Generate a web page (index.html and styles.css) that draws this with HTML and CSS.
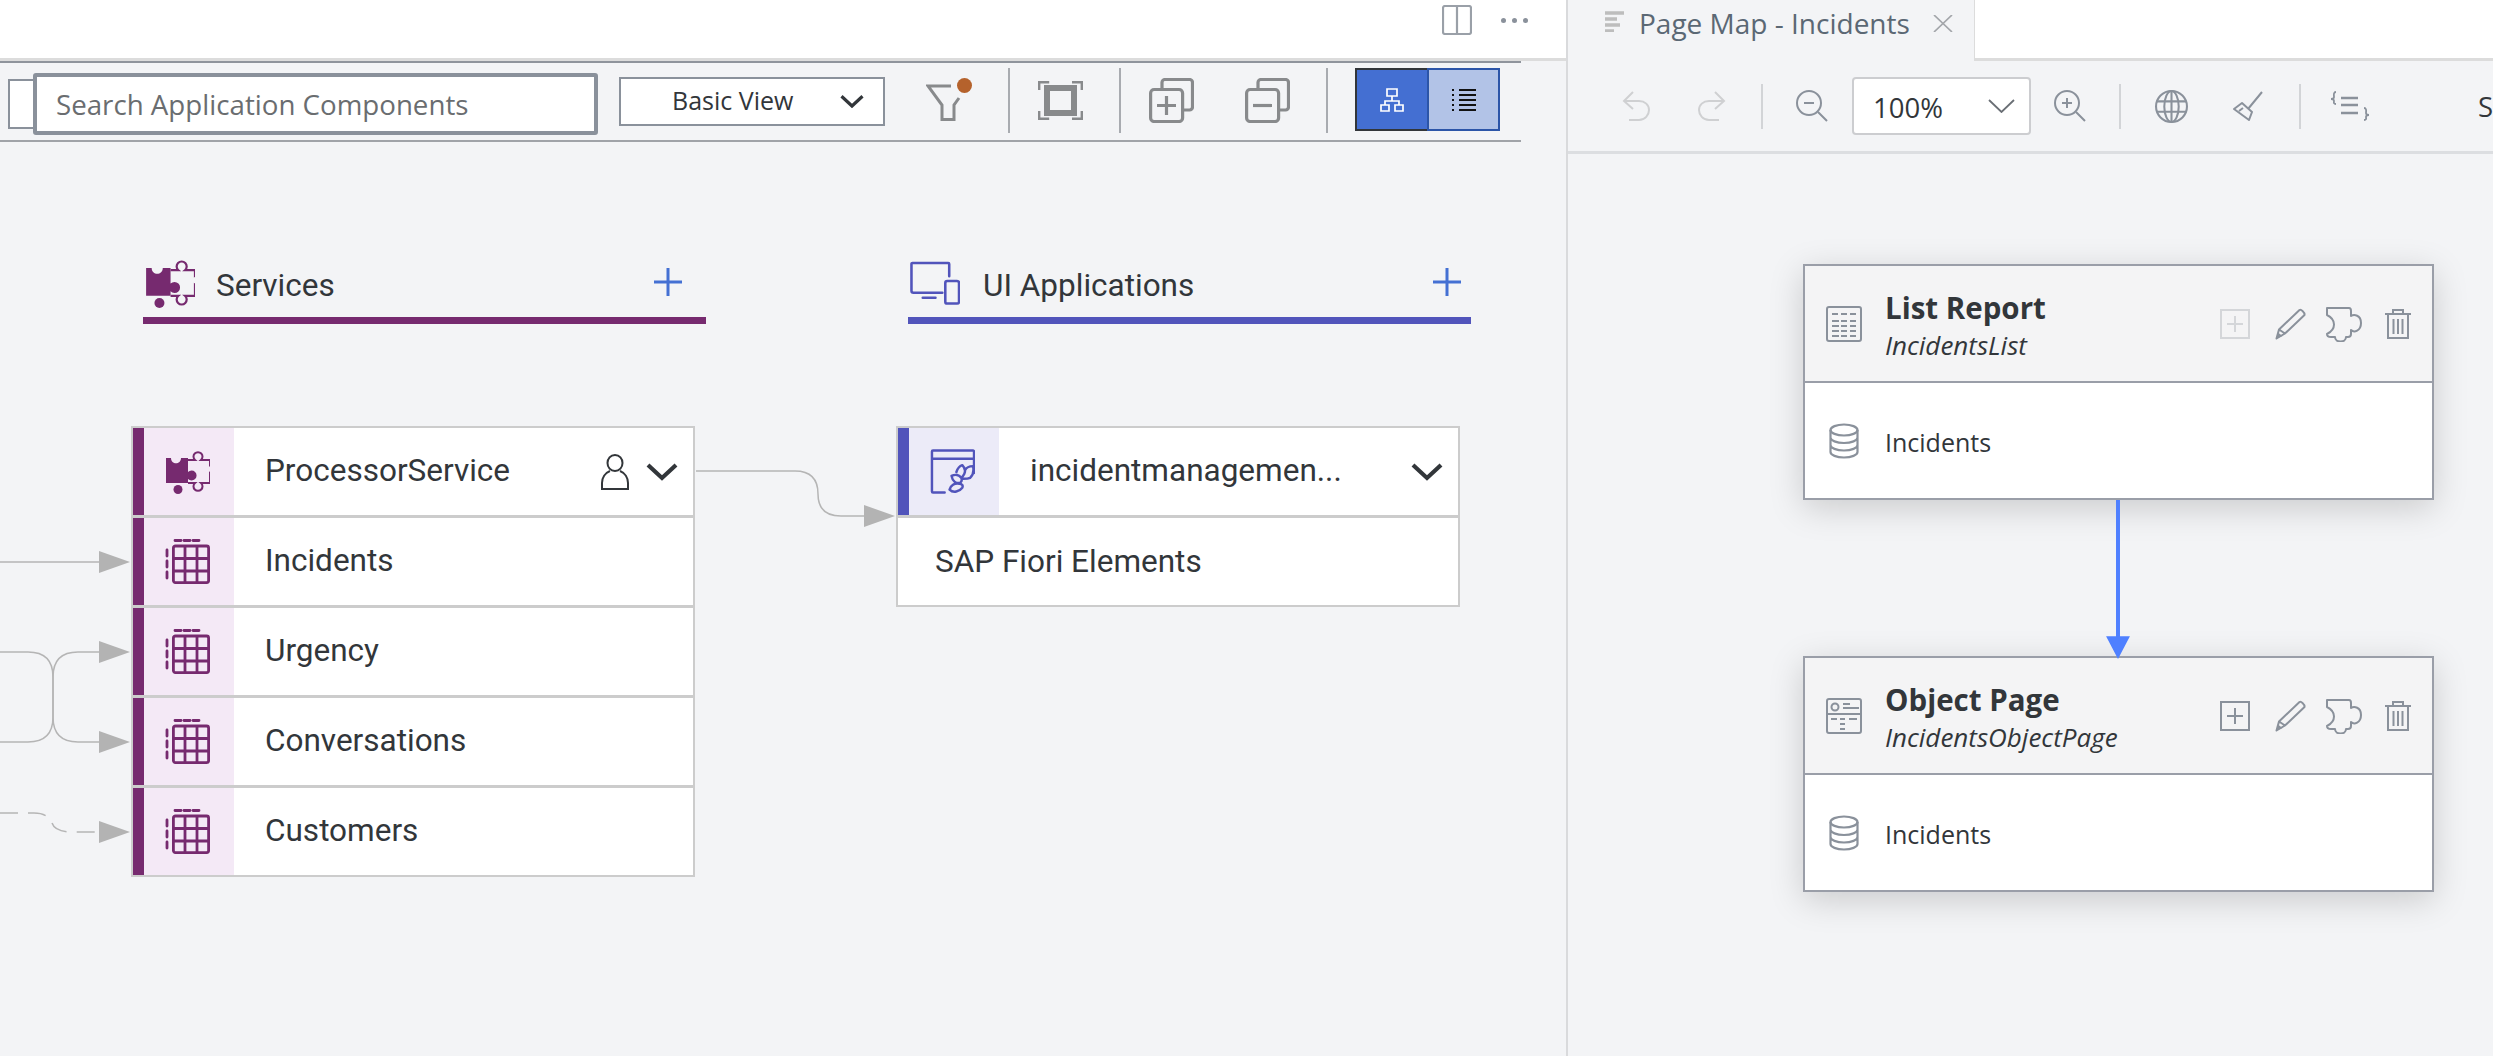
FILE: index.html
```html
<!DOCTYPE html>
<html lang="en">
<head>
  <meta charset="UTF-8" />
  <title>Application Modeler - Page Map</title>
  <link rel="stylesheet" href="styles.css">
</head>
<body>
  <svg class="icon-defs" width="0" height="0">
    <defs>
      <symbol id="i-puzzle" viewBox="0 0 45 45">
        <path fill="currentColor" d="M1 9h5c0 7 10 7 10 0h7v14a5 5 0 1 1 0 7v4H1z"/>
        <circle fill="currentColor" cx="13" cy="40.500" r="4.500"/>
        <path fill="none" stroke="currentColor" stroke-width="2" d="M23 11h7a4.500 4.500 0 1 1 6 0h9v5a4.500 4.500 0 1 1 0 8v10h-9a4.500 4.500 0 1 1-6 0h-7"/>
      </symbol>
      <symbol id="i-table" viewBox="0 0 45 45">
        <g fill="none" stroke="currentColor" stroke-width="2.800">
          <rect x="8.400" y="7" width="35.200" height="36.600" rx="2"/>
          <path d="M20 7v37M32 7v37M8 19.500h36M8 32h36"/>
          <path stroke-linecap="round" d="M10 1.500h6M19 1.500h6M28 1.500h6M2 11v6M2 22v6M2 33v6"/>
        </g>
      </symbol>
      <symbol id="i-chevron" viewBox="0 0 32 18">
        <path fill="none" stroke="currentColor" stroke-width="4.200" d="M2 2l14 13L30 2"/>
      </symbol>
      <symbol id="i-add" viewBox="0 0 30 30">
        <path fill="none" stroke="currentColor" stroke-width="2" d="M1 1h28v28H1zM15 7v16M7 15h16"/>
      </symbol>
      <symbol id="i-pencil" viewBox="0 0 32 32">
        <path fill="none" stroke="currentColor" stroke-width="2" stroke-linejoin="round" d="M1.500 30.500l2.500-9L24.500 2c1.500-1 5.500 2.500 5 5L10 25.500zM4 21.500l6 4"/>
        <path fill="currentColor" d="M1.500 30.500l1.500-6 4.500 3.500z"/>
      </symbol>
      <symbol id="i-ext" viewBox="0 0 36 36">
        <path fill="none" stroke="currentColor" stroke-width="2" stroke-linejoin="round" d="M1 2h22c1 0 2 1 2 3v5c3-2 10-1 10 7s-7 10-10 7v4c0 2-1 3-3 3h-2c0 6-11 6-11 0H5c-2 0-4-1-4-3 4-2 7-5 7-9.500S5 11 1 9z"/>
      </symbol>
      <symbol id="i-trash" viewBox="0 0 26 30">
        <path fill="none" stroke="currentColor" stroke-width="2" d="M0 5h26M8 5V1h10v4M3 5v24h20V5M8.500 10v15M13 10v15M17.500 10v15"/>
      </symbol>
      <symbol id="i-db" viewBox="0 0 30 36">
        <g fill="none" stroke="currentColor" stroke-width="2.200">
          <ellipse cx="15" cy="7" rx="13.500" ry="5.500"/>
          <path d="M1.500 7v22c0 3 6 5.500 13.500 5.500s13.500-2.500 13.500-5.500V7M1.500 14.500c0 3 6 5.500 13.500 5.500s13.500-2.500 13.500-5.500M1.500 22c0 3 6 5.500 13.500 5.500S28.500 25 28.500 22"/>
        </g>
      </symbol>
    </defs>
  </svg>

  <div class="workspace">
    <section class="modeler">
      <div class="title-bar">
        <svg class="split-icon" viewBox="0 0 30 30"><path fill="none" stroke="currentColor" stroke-width="2.200" d="M3 1h24a2 2 0 0 1 2 2v24a2 2 0 0 1-2 2H3a2 2 0 0 1-2-2V3a2 2 0 0 1 2-2zM15 1v28"/></svg>
        <div class="more-dots"><span></span><span></span><span></span></div>
      </div>

      <div class="modeler-toolbar">
        <div class="search-stub"></div>
        <div class="search-box">Search Application Components</div>
        <div class="view-select">
          <span>Basic View</span>
          <svg class="view-chevron" viewBox="0 0 32 18"><use href="#i-chevron"/></svg>
        </div>
        <div class="filter-btn">
          <svg class="filter-icon" viewBox="0 0 36 37"><path fill="none" stroke="#888a8c" stroke-width="3" d="M25 2H2l14 19v14.500h12V21l5-7"/></svg>
          <span class="filter-dot"></span>
        </div>
        <div class="tool-sep sep-fit"></div>
        <svg class="fit-icon" viewBox="0 0 45 39">
          <g fill="none" stroke="#888a8c">
            <path stroke-width="2.400" d="M1.200 9V1.200h10M34 1.200h9.800V9M1.200 30v7.800h10M34 37.800h9.800V30"/>
            <rect x="9" y="7" width="27" height="25" stroke-width="6"/>
          </g>
        </svg>
        <div class="tool-sep sep-copy"></div>
        <svg class="copy-icon" viewBox="0 0 45 45">
          <g fill="none" stroke="#888a8c" stroke-width="3.200">
            <path d="M13 11V4.500a3 3 0 0 1 3-3h24.500a3 3 0 0 1 3 3V29a3 3 0 0 1-3 3H34"/>
            <rect x="1.600" y="11.500" width="32" height="32" rx="3.500"/>
            <path d="M17.500 18v19M8 27.500h19"/>
          </g>
        </svg>
        <svg class="copy-icon copy-minus" viewBox="0 0 45 45">
          <g fill="none" stroke="#888a8c" stroke-width="3.200">
            <path d="M13 11V4.500a3 3 0 0 1 3-3h24.500a3 3 0 0 1 3 3V29a3 3 0 0 1-3 3H34"/>
            <rect x="1.600" y="11.500" width="32" height="32" rx="3.500"/>
            <path d="M8 27.500h19"/>
          </g>
        </svg>
        <div class="tool-sep sep-toggle"></div>
        <div class="view-toggle">
          <div class="toggle-part toggle-on">
            <svg class="toggle-icon" viewBox="0 0 24 24"><path fill="none" stroke="#fff" stroke-width="1.700" d="M7 1h10v7H7zM12 8v5M5 17v-4h14v4M1 17h8v6H1zM15 17h8v6h-8z"/></svg>
          </div>
          <div class="toggle-part toggle-off">
            <svg class="toggle-icon" viewBox="0 0 24 24"><path fill="none" stroke="#111" stroke-width="1.800" d="M7 2h17M7 7h17M7 12h17M7 17h17M7 22h17M0 2h2M0 7h2M0 12h2M0 17h2M0 22h2"/></svg>
          </div>
        </div>
      </div>

      <div class="diagram">
        <svg class="wires" viewBox="0 142 1566 914">
          <g fill="none" stroke="#b5b5b5" stroke-width="1.500">
            <path d="M0 562H100"/>
            <path d="M0 652H28Q53 652 53 677V717Q53 742 28 742H0"/>
            <path d="M100 652H78Q53 652 53 677V717Q53 742 78 742H100"/>
            <path stroke-dasharray="18 10" d="M0 813H34Q48 813 52 823Q55 832 72 832H100"/>
            <path d="M696 471H795Q818 471 818 494Q818 516 841 516H866"/>
          </g>
          <g fill="#b3b3b3">
            <path d="M99 551L130 562L99 573z"/>
            <path d="M99 641L130 652L99 663z"/>
            <path d="M99 731L130 742L99 753z"/>
            <path d="M99 821L130 832L99 843z"/>
            <path d="M864 505L895 516L864 527z"/>
          </g>
        </svg>

        <div class="lane lane-services">
          <svg class="lane-icon"><use href="#i-puzzle"/></svg>
          <span class="lane-name">Services</span>
          <svg class="lane-plus" viewBox="0 0 28 28"><path fill="none" stroke="#4470d3" stroke-width="3" d="M14 0v28M0 14h28"/></svg>
        </div>
        <div class="lane lane-apps">
          <svg class="lane-icon" viewBox="0 0 51 44">
            <g fill="none" stroke="currentColor" stroke-width="2.600" stroke-linecap="round" stroke-linejoin="round">
              <path d="M40 15V2.500a1 1 0 0 0-1-1H2.500a1 1 0 0 0-1 1V30a2 2 0 0 0 2 2H33M13 37h13"/>
              <rect x="36" y="20" width="14" height="23" rx="2"/>
            </g>
          </svg>
          <span class="lane-name">UI Applications</span>
          <svg class="lane-plus" viewBox="0 0 28 28"><path fill="none" stroke="#4470d3" stroke-width="3" d="M14 0v28M0 14h28"/></svg>
        </div>

        <div class="node node-services">
          <div class="node-row">
            <div class="node-tag"><svg class="tag-icon"><use href="#i-puzzle"/></svg></div>
            <span class="node-label">ProcessorService</span>
            <svg class="person-icon" viewBox="0 0 28 36"><path fill="none" stroke="#32363a" stroke-width="2" d="M14 1c4.500 0 7.500 3.500 7.500 8s-3 8-7.500 8-7.500-3.500-7.500-8 3-8 7.500-8zM9 17C4 19 1 24 1 29v6h26v-6c0-5-3-10-8-12"/></svg>
            <svg class="node-chevron"><use href="#i-chevron"/></svg>
          </div>
          <div class="node-row">
            <div class="node-tag"><svg class="tag-icon"><use href="#i-table"/></svg></div>
            <span class="node-label">Incidents</span>
          </div>
          <div class="node-row">
            <div class="node-tag"><svg class="tag-icon"><use href="#i-table"/></svg></div>
            <span class="node-label">Urgency</span>
          </div>
          <div class="node-row">
            <div class="node-tag"><svg class="tag-icon"><use href="#i-table"/></svg></div>
            <span class="node-label">Conversations</span>
          </div>
          <div class="node-row">
            <div class="node-tag"><svg class="tag-icon"><use href="#i-table"/></svg></div>
            <span class="node-label">Customers</span>
          </div>
        </div>

        <div class="node node-apps">
          <div class="node-row">
            <div class="node-tag">
              <svg class="tag-icon" viewBox="0 0 46 45">
                <g fill="none" stroke="currentColor" stroke-width="2.500" stroke-linejoin="round" stroke-linecap="round">
                  <path d="M45 24V2a1 1 0 0 0-1-1H3a1 1 0 0 0-1 1v41a1 1 0 0 0 1 1h12M2 9.500h43"/>
                  <path d="M22 27c4-2 8-1 10 2 1 2 0 4-1 5-4 1-8-1-9-7zM27 23c1-3 3-6 6-7 2 2 4 5 2 9-1 2-2 3-3 4M36 21c1-2 4-4 8-4 1 4 0 9-3 12-2 1-5 1-7 1M20 41c1-4 5-7 10-6 3 0 4 2 3 4-3 4-9 6-13 2z"/>
                </g>
              </svg>
            </div>
            <span class="node-label">incidentmanagemen...</span>
            <svg class="node-chevron"><use href="#i-chevron"/></svg>
          </div>
          <div class="node-row node-plain">
            <span class="node-label">SAP Fiori Elements</span>
          </div>
        </div>
      </div>
    </section>

    <section class="pagemap">
      <div class="tab-strip">
        <div class="tab">
          <svg class="tab-icon" viewBox="0 0 19 21"><path fill="none" stroke="#bdbdbd" stroke-width="3.400" d="M0 2h19M0 8h12M0 14h15M0 20h9"/></svg>
          <span class="tab-title">Page Map - Incidents</span>
          <svg class="tab-close" viewBox="0 0 20 17"><path fill="none" stroke="#a3a6aa" stroke-width="1.700" d="M1 0l18 17M19 0L1 17"/></svg>
        </div>
        <div class="tab-rest"></div>
      </div>

      <div class="map-toolbar">
        <svg class="map-tool tool-undo" viewBox="0 0 30 30"><path fill="none" stroke="#cfd0d2" stroke-width="2" d="M12 1L3 10l9 8M3 10h15c6 0 10 4 10 9s-4 10-10 10H8"/></svg>
        <svg class="map-tool tool-redo" viewBox="0 0 30 30"><path fill="none" stroke="#cfd0d2" stroke-width="2" d="M18 1l9 9-9 8M27 10H12C6 10 2 14 2 19s4 10 10 10h10"/></svg>
        <div class="map-sep sep-undo"></div>
        <svg class="map-tool tool-out" viewBox="0 0 32 32"><g fill="none" stroke="#8a919b" stroke-width="2"><circle cx="13" cy="13" r="12"/><path d="M22 22l9 9M8 13h10"/></g></svg>
        <div class="zoom-select">
          <span>100%</span>
          <svg class="zoom-chevron" viewBox="0 0 27 14"><path fill="none" stroke="#6a6f75" stroke-width="1.800" d="M1 1l12.500 12L26 1"/></svg>
        </div>
        <svg class="map-tool tool-in" viewBox="0 0 32 32"><g fill="none" stroke="#8a919b" stroke-width="2"><circle cx="13" cy="13" r="12"/><path d="M22 22l9 9M8 13h10M13 8v10"/></g></svg>
        <div class="map-sep sep-zoom"></div>
        <svg class="map-tool tool-globe" viewBox="0 0 32 32"><g fill="none" stroke="#8a919b" stroke-width="2"><circle cx="16" cy="16" r="15"/><ellipse cx="16" cy="16" rx="7" ry="15"/><path d="M16 1v30M2 11h28M2 21h28"/></g></svg>
        <svg class="map-tool tool-brush" viewBox="0 0 30 30"><g fill="none" stroke="#8a919b" stroke-width="2" stroke-linejoin="round"><path d="M29 1L15 18M9 12l10 9-3 8L1 18zM6 20l4-3"/></g></svg>
        <div class="map-sep sep-brush"></div>
        <svg class="map-tool tool-fmt" viewBox="0 0 38 30"><g fill="none" stroke="#8a919b" stroke-width="1.800"><path d="M5 1C2 1 3 5 3 6S2 8 0 8c2 0 3 1 3 2s-1 3 2 3M33 17c3 0 2 4 2 5s1 2 3 2c-2 0-3 1-3 2s1 3-2 3"/><path stroke-width="2.400" d="M10 7h17M10 14h17M10 22h17"/></g></svg>
        <span class="cut-label">S</span>
      </div>

      <div class="map-canvas">
        <svg class="map-link" viewBox="0 0 24 160"><path fill="#4f80ff" d="M10 0h4v137h10l-12 23L0 137h10z"/></svg>

        <div class="page-card card-list">
          <div class="card-head">
            <svg class="card-icon" viewBox="0 0 36 36"><g fill="none" stroke="#8a919b" stroke-width="2"><rect x="1" y="1" width="34" height="34" rx="2"/></g><path stroke="#8a919b" stroke-width="2.200" d="M6 8h6M15 8h6M24 8h6M6 15h7M15 15h6M24 15h6M6 20h7M15 20h6M24 20h6M6 25h7M15 25h6M24 25h6M6 30h7M15 30h6M24 30h6"/></svg>
            <div class="card-names">
              <div class="card-title">List Report</div>
              <div class="card-sub">IncidentsList</div>
            </div>
            <div class="card-actions">
              <svg class="act-add act-off"><use href="#i-add"/></svg>
              <svg class="act-pencil"><use href="#i-pencil"/></svg>
              <svg class="act-ext"><use href="#i-ext"/></svg>
              <svg class="act-trash"><use href="#i-trash"/></svg>
            </div>
          </div>
          <div class="card-body">
            <svg class="db-icon"><use href="#i-db"/></svg>
            <span>Incidents</span>
          </div>
        </div>

        <div class="page-card card-object">
          <div class="card-head">
            <svg class="card-icon" viewBox="0 0 36 36"><g fill="none" stroke="#8a919b" stroke-width="2"><rect x="1" y="1" width="34" height="34" rx="2"/><path d="M1 16h34"/><circle cx="9" cy="9" r="3.500"/></g><path stroke="#8a919b" stroke-width="2.200" d="M17 6h7M17 10h16M5 21h6M14 21h5M23 21h8M14 26h5M14 31h5"/></svg>
            <div class="card-names">
              <div class="card-title">Object Page</div>
              <div class="card-sub">IncidentsObjectPage</div>
            </div>
            <div class="card-actions">
              <svg class="act-add"><use href="#i-add"/></svg>
              <svg class="act-pencil"><use href="#i-pencil"/></svg>
              <svg class="act-ext"><use href="#i-ext"/></svg>
              <svg class="act-trash"><use href="#i-trash"/></svg>
            </div>
          </div>
          <div class="card-body">
            <svg class="db-icon"><use href="#i-db"/></svg>
            <span>Incidents</span>
          </div>
        </div>
      </div>
    </section>
  </div>
</body>
</html>
```

FILE: styles.css
```css
* {
  box-sizing: border-box;
}
html, body {
  height: 100%;
}
body {
  margin: 0;
  font-family: "Open Sans", "Noto Sans", sans-serif;
  background: #f3f4f6;
  color: #32363a;
  overflow: hidden;
}
.icon-defs {
  position: absolute;
}
.workspace {
  display: flex;
  width: 2493px;
  height: 1056px;
}

/* left pane */
.modeler {
  width: 1568px;
  flex: none;
  display: flex;
  flex-direction: column;
  border-right: 2px solid #d9dadc;
}
.title-bar {
  height: 61px;
  flex: none;
  background: #fff;
  border-bottom: 3px solid #dcdcdc;
  display: flex;
  align-items: flex-start;
  padding: 5px 0 0 1442px;
}
.split-icon {
  width: 30px;
  height: 30px;
  color: #9aa0a8;
}
.more-dots {
  display: flex;
  gap: 6px;
  margin: 13px 0 0 29px;
}
.more-dots span {
  width: 5px;
  height: 5px;
  border-radius: 50%;
  background: #8a919b;
}
.modeler-toolbar {
  width: 1521px;
  height: 81px;
  flex: none;
  display: flex;
  align-items: center;
  padding-left: 8px;
  border-top: 2px solid #8f949c;
  border-bottom: 2px solid #a0a3a8;
}
.search-stub {
  width: 27px;
  height: 50px;
  margin-top: 4px;
  margin-right: -2px;
  background: #fff;
  border: 2px solid #8a919b;
}
.search-box {
  width: 565px;
  height: 62px;
  margin-top: 4px;
  padding-left: 19px;
  position: relative;
  background: #fff;
  border: 4px solid #8a919b;
  border-radius: 3px;
  display: flex;
  align-items: center;
  font-size: 27.700px;
  color: #6a6d70;
}
.view-select {
  width: 266px;
  height: 49px;
  margin-left: 21px;
  padding: 0 19px 3px 51px;
  background: #fff;
  border: 2px solid #8a919b;
  display: flex;
  align-items: center;
  justify-content: space-between;
  font-size: 25px;
}
.view-chevron {
  width: 24px;
  height: 15px;
  margin-top: 3px;
  color: #32363a;
}
.filter-btn {
  width: 47px;
  height: 44px;
  margin-left: 41px;
  margin-bottom: 6px;
  position: relative;
}
.filter-icon {
  position: absolute;
  left: 0;
  bottom: 0;
  width: 36px;
  height: 37px;
}
.filter-dot {
  position: absolute;
  right: 1px;
  top: 1px;
  width: 15px;
  height: 15px;
  border-radius: 50%;
  background: #b5622c;
}
.tool-sep {
  width: 2px;
  height: 65px;
  margin-bottom: 3px;
  background: #a8abb0;
}
.sep-fit {
  margin-left: 35px;
}
.fit-icon {
  width: 45px;
  height: 39px;
  margin-left: 28px;
  margin-bottom: 3px;
}
.sep-copy {
  margin-left: 36px;
}
.copy-icon {
  width: 45px;
  height: 45px;
  margin-left: 28px;
  margin-bottom: 3px;
}
.copy-minus {
  margin-left: 51px;
}
.sep-toggle {
  margin-left: 36px;
}
.view-toggle {
  display: flex;
  height: 63px;
  margin-left: 27px;
  margin-bottom: 4px;
}
.toggle-part {
  width: 72px;
  display: flex;
  align-items: center;
  justify-content: center;
}
.toggle-on {
  background: #446fd2;
  border: 2px solid #32363a;
  border-right: none;
}
.toggle-off {
  width: 73px;
  background: #b2c3e7;
  border: 2px solid #2c55a8;
}
.toggle-icon {
  width: 24px;
  height: 24px;
}

/* diagram canvas */
.diagram {
  flex: 1;
  position: relative;
  font-family: Roboto, sans-serif;
}
.wires {
  position: absolute;
  left: 0;
  top: 0;
  width: 1566px;
  height: 914px;
}
.lane {
  position: absolute;
  top: 116px;
  width: 563px;
  height: 66px;
  display: flex;
  align-items: flex-start;
  padding-bottom: 7px;
  border-bottom: 7px solid;
}
.lane-services {
  left: 143px;
  color: #762a6f;
  border-color: #762a6f;
}
.lane-apps {
  left: 908px;
  color: #5154bb;
  border-color: #5154bb;
}
.lane-icon {
  width: 50px;
  height: 50px;
  margin-left: 2px;
}
.lane-apps .lane-icon {
  height: 44px;
  margin-top: 3px;
}
.lane-name {
  margin-left: 21px;
  margin-top: 9px;
  font-size: 31.500px;
  line-height: 38px;
  color: #32363a;
}
.lane-apps .lane-name {
  margin-left: 23px;
}
.lane-plus {
  width: 28px;
  height: 28px;
  margin-left: auto;
  margin-top: 10px;
  margin-right: 24px;
}
.lane-apps .lane-plus {
  margin-right: 10px;
}
.node {
  position: absolute;
  top: 284px;
  width: 564px;
  background: #fff;
  border: 2px solid #cccccc;
}
.node-services {
  left: 131px;
  --accent: #762a6f;
  --tint: #f4e9f6;
}
.node-apps {
  left: 896px;
  --accent: #5154bb;
  --tint: #ecebf8;
}
.node-row {
  height: 90px;
  display: flex;
  align-items: center;
  border-bottom: 3px solid #cccccc;
}
.node-row:last-child {
  height: 87px;
  border-bottom: none;
}
.node-tag {
  width: 101px;
  align-self: stretch;
  flex: none;
  display: flex;
  align-items: center;
  padding-left: 32px;
  background: var(--tint);
  border-left: 11px solid var(--accent);
  color: var(--accent);
}
.tag-icon {
  width: 45px;
  height: 45px;
  margin-left: -11px;
}
.node-label {
  margin-left: 31px;
  margin-bottom: 3px;
  font-size: 31.500px;
  white-space: nowrap;
}
.node-plain .node-label {
  margin-left: 37px;
  margin-bottom: 0;
}
.person-icon {
  width: 28px;
  height: 36px;
  margin-left: auto;
  color: #32363a;
}
.node-chevron {
  width: 32px;
  height: 18px;
  margin-left: 17px;
  margin-right: 15px;
  color: #32363a;
}
.node-apps .node-chevron {
  margin-left: auto;
}

/* right pane */
.pagemap {
  flex: 1;
  min-width: 0;
  display: flex;
  flex-direction: column;
  font-family: "Open Sans", "Noto Sans", sans-serif;
}
.tab-strip {
  height: 61px;
  flex: none;
  display: flex;
  background: #fff;
}
.tab {
  width: 407px;
  display: flex;
  align-items: flex-start;
  padding: 11px 0 0 37px;
  background: #f3f4f6;
  border-right: 1px solid #dcdcdc;
}
.tab-icon {
  width: 19px;
  height: 21px;
}
.tab-title {
  margin-left: 15px;
  margin-top: -7px;
  font-size: 28px;
  color: #5b6874;
  white-space: nowrap;
}
.tab-close {
  width: 20px;
  height: 17px;
  margin: 4px 0 0 23px;
}
.tab-rest {
  flex: 1;
  border-bottom: 3px solid #dcdcdc;
}
.map-toolbar {
  height: 93px;
  flex: none;
  display: flex;
  align-items: center;
  padding-left: 53px;
  border-bottom: 3px solid #dcdee1;
  overflow: hidden;
}
.map-tool {
  flex: none;
  width: 30px;
  height: 30px;
}
.tool-redo {
  margin-left: 46px;
}
.map-sep {
  flex: none;
  width: 2px;
  height: 45px;
  background: #d2d4d7;
}
.sep-undo {
  margin-left: 34px;
}
.tool-out {
  width: 32px;
  height: 32px;
  margin-left: 33px;
}
.zoom-select {
  flex: none;
  width: 179px;
  height: 58px;
  margin-left: 24px;
  padding: 3px 14px 0 19px;
  background: #fff;
  border: 2px solid #cccdd0;
  border-radius: 4px;
  display: flex;
  align-items: center;
  justify-content: space-between;
  font-size: 27.500px;
}
.zoom-chevron {
  width: 27px;
  height: 14px;
  margin-top: -3px;
}
.tool-in {
  width: 32px;
  height: 32px;
  margin-left: 23px;
}
.sep-zoom {
  margin-left: 33px;
}
.tool-globe {
  width: 33px;
  height: 33px;
  margin-left: 34px;
}
.tool-brush {
  margin-left: 45px;
}
.sep-brush {
  margin-left: 36px;
}
.tool-fmt {
  width: 38px;
  margin-left: 30px;
}
.cut-label {
  margin-left: 109px;
  font-size: 27.500px;
}
.map-canvas {
  flex: 1;
  position: relative;
}
.map-link {
  position: absolute;
  left: 538px;
  top: 346px;
  width: 24px;
  height: 159px;
  z-index: 1;
}
.page-card {
  position: absolute;
  left: 235px;
  width: 631px;
  height: 236px;
  background: #fff;
  border: 2px solid #9a9ea8;
  box-shadow: 0 8px 32px rgba(0, 0, 0, 0.17);
  display: flex;
  flex-direction: column;
}
.card-list {
  top: 110px;
}
.card-object {
  top: 502px;
}
.card-head {
  height: 117px;
  flex: none;
  display: flex;
  align-items: center;
  padding: 0 21px;
  background: #f4f4f5;
  border-bottom: 2px solid #9a9ea8;
}
.card-icon {
  width: 36px;
  height: 36px;
  flex: none;
}
.card-names {
  margin-left: 23px;
  padding-top: 4px;
}
.card-title {
  font-size: 29.500px;
  font-weight: 700;
  line-height: 36px;
}
.card-sub {
  margin-top: 3px;
  font-size: 26px;
  font-style: italic;
  line-height: 32px;
}
.card-actions {
  margin-left: auto;
  display: flex;
  align-items: center;
  color: #8a919b;
}
.act-add {
  width: 30px;
  height: 30px;
}
.act-off {
  color: #d4d6d9;
}
.act-pencil {
  width: 32px;
  height: 32px;
  margin-left: 25px;
}
.act-ext {
  width: 36px;
  height: 36px;
  margin-left: 19px;
}
.act-trash {
  width: 26px;
  height: 30px;
  margin-left: 23px;
}
.card-body {
  flex: 1;
  display: flex;
  align-items: center;
  padding-left: 24px;
  font-size: 25px;
  color: #32363a;
}
.db-icon {
  width: 30px;
  height: 36px;
  color: #8a919b;
}
.card-body span {
  margin-left: 26px;
  padding-top: 2px;
}
```
